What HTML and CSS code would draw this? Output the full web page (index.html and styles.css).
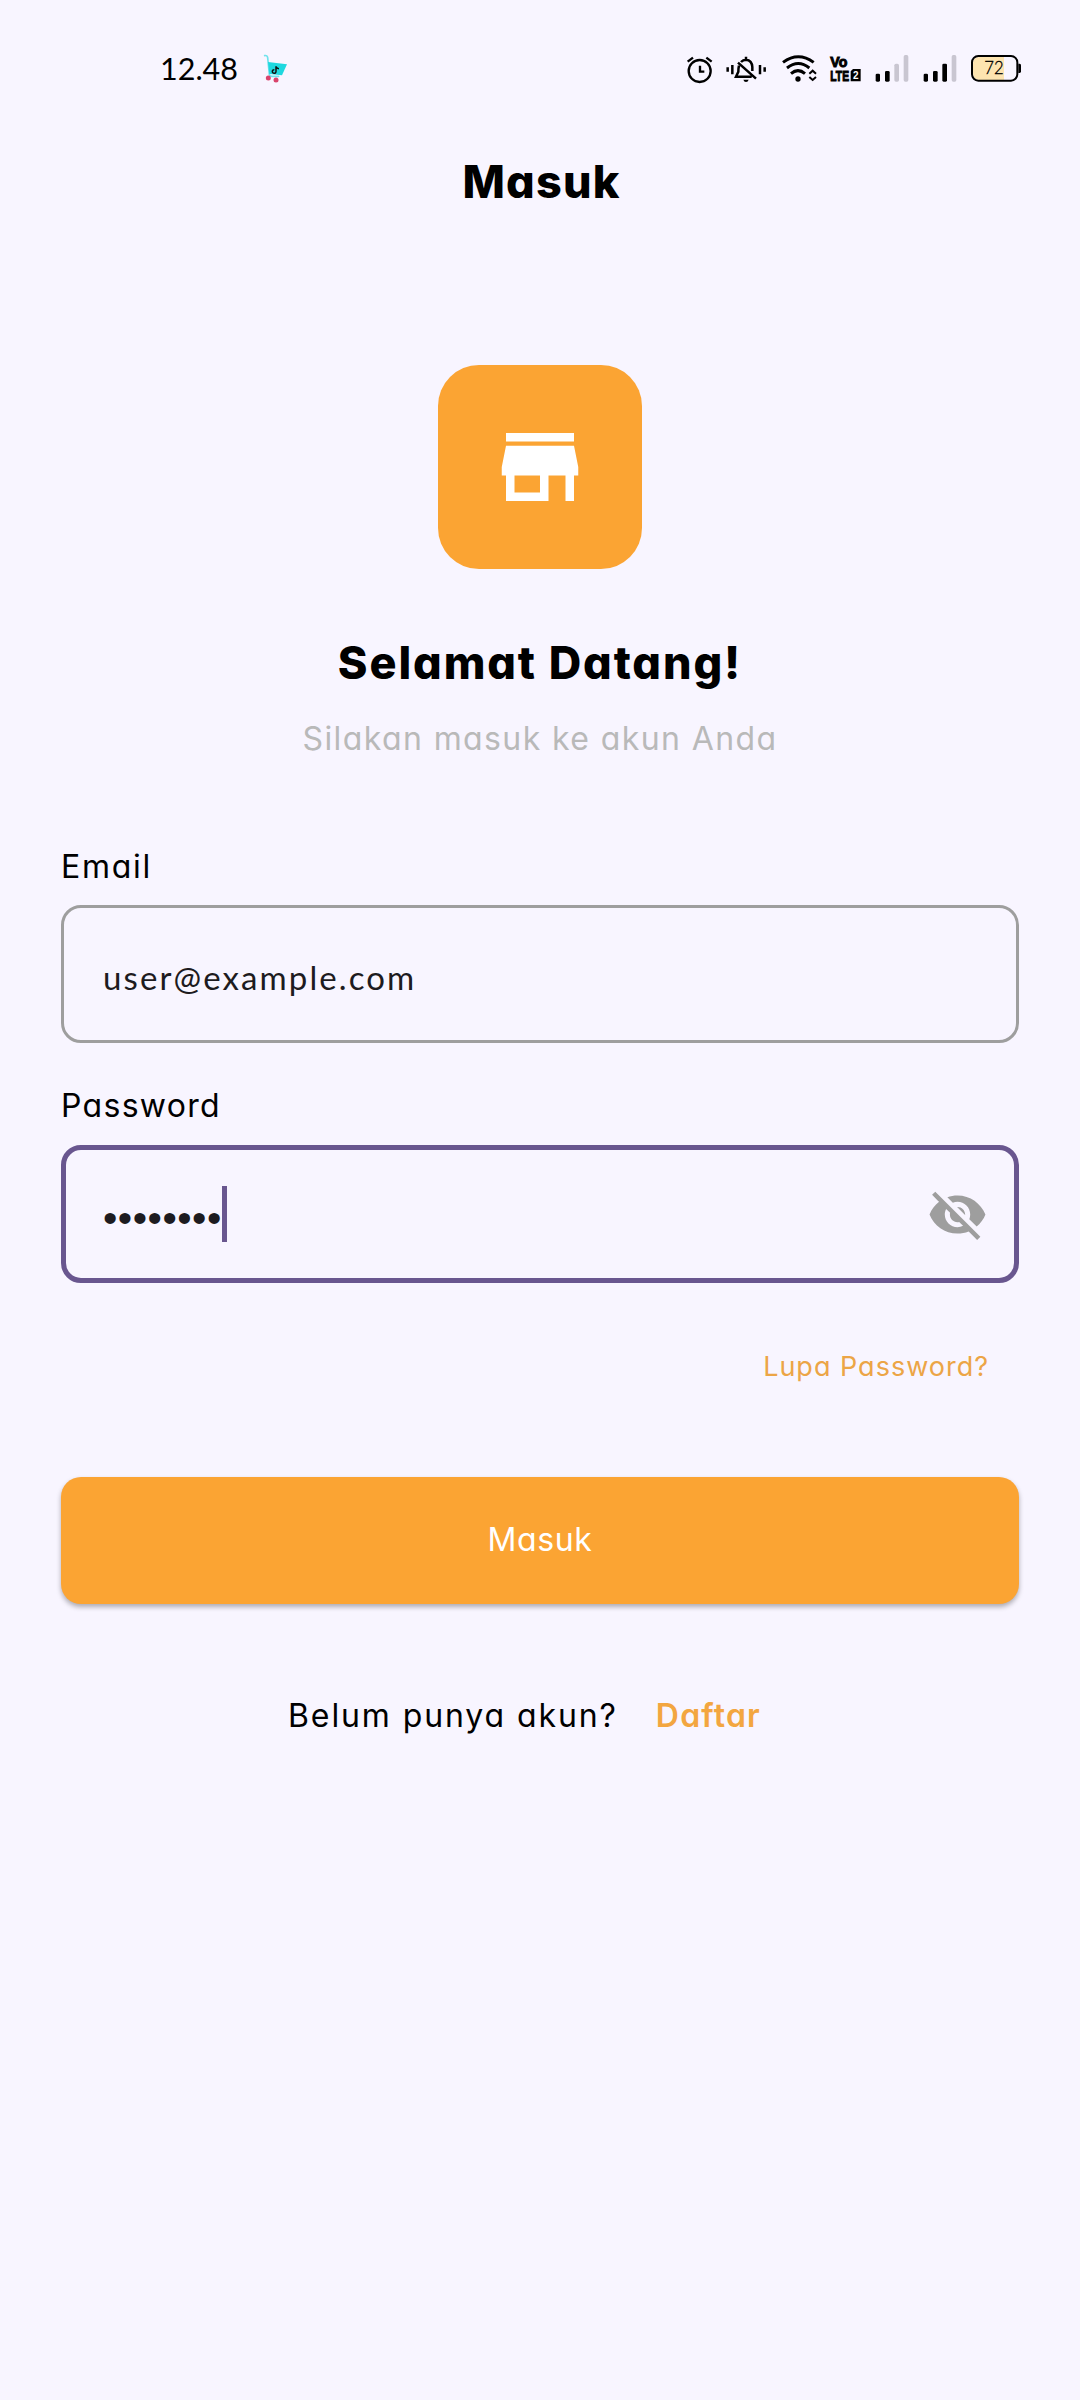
FILE: index.html
```html
<!DOCTYPE html>
<html lang="id">
<head>
<meta charset="utf-8">
<title>Masuk</title>
<link rel="stylesheet" href="styles.css">
</head>
<body>
<div class="status-bar">
  <span class="clock">12.48</span>
  <svg class="cart" viewBox="366 0 78 180" width="26" height="60" aria-hidden="true">
    <path d="M374 47q8-2 9 6l5 50q1 6 8 6h20" fill="none" stroke="#6fe3ec" stroke-width="5" stroke-linecap="round"/>
    <path d="M384 66l57 7-15 33-38-4z" fill="#1fd8df"/>
    <path d="M408 79v15a5.500 5.500 0 1 1-5-5M408 80q3 6 9 6" fill="none" stroke="#111" stroke-width="4.500"/>
    <circle cx="385" cy="114" r="7.500" fill="#d9436c"/><circle cx="408" cy="120" r="7.500" fill="#d9436c"/>
  </svg>
  <div class="status-icons">
    <svg class="alarm" viewBox="42 0 96 180" width="32" height="60" aria-hidden="true">
      <g fill="none" stroke="#000" stroke-width="7"><circle cx="89" cy="93" r="33"/><path d="M90 77v18h13M53 65l16-12M109 53l16 12"/></g>
    </svg>
    <svg class="silent" viewBox="162 0 132 180" width="44" height="60" aria-hidden="true">
      <g fill="none" stroke="#000" stroke-width="7.500"><path d="M173 82v13M187 75v28M270 75v28M284 82v13M228 50v10M213 66q6-7 15-7 18 2 19 22v12M207 77q-2 8-2 18l-7 15h47M204 68l54 48" /></g>
      <path d="M220 119h16q-2 7-8 7t-8-7z"/>
    </svg>
    <svg class="wifi" viewBox="330 0 114 180" width="38" height="60" aria-hidden="true">
      <g fill="none" stroke="#000" stroke-width="9"><path d="M339 67q46-34 92 0M351 84q34-27 67 0M363 101q21-18 42 0"/></g>
      <circle cx="384" cy="117" r="8"/>
      <path d="M418 101l10-9 10 9M418 111l10 9 10-9" fill="none" stroke="#000" stroke-width="6"/>
    </svg>
    <svg class="volte" viewBox="474 0 105 180" width="35" height="60" aria-hidden="true">
      <text class="net" x="481" y="81" textLength="51" lengthAdjust="spacingAndGlyphs">Vo</text>
      <text class="net" x="481" y="123" textLength="56" lengthAdjust="spacingAndGlyphs">LTE</text>
      <path d="M549 87h23v37h-30v-30z"/>
      <text class="sim" x="549" y="117">2</text>
    </svg>
    <svg class="signal" viewBox="42 0 108 180" width="36" height="60" aria-hidden="true">
      <rect x="47" y="101" width="13" height="24" rx="4"/><rect x="75" y="93" width="14" height="32" rx="4"/>
      <g fill="#c9c6d1"><rect x="103" y="71" width="14" height="54" rx="5"/><rect x="131" y="45" width="14" height="80" rx="5"/></g>
    </svg>
    <svg class="signal" viewBox="186 0 108 180" width="36" height="60" aria-hidden="true">
      <rect x="191" y="101" width="13" height="24" rx="4"/><rect x="219" y="93" width="14" height="32" rx="4"/><rect x="247" y="71" width="14" height="54" rx="4"/>
      <rect x="275" y="45" width="14" height="80" rx="5" fill="#c9c6d1"/>
    </svg>
    <svg class="battery" viewBox="330 0 156 180" width="52" height="60" aria-hidden="true">
      <path d="M432 51v69h-75q-18-2-18-20V69q0-16 18-18z" fill="#fde4b0"/>
      <rect x="336" y="48" width="136" height="74" rx="19" fill="none" stroke="#000" stroke-width="6"/>
      <path d="M475 71h4q4 0 4 5v18q0 5-4 5h-4z"/>
      <text class="level" x="373" y="103" textLength="58" lengthAdjust="spacingAndGlyphs">72</text>
    </svg>
  </div>
</div>
<header class="app-bar"><h1 class="title">Masuk</h1></header>
<main class="page">
  <div class="logo">
    <svg viewBox="0 0 24 24" width="102" height="102" fill="#fff" aria-hidden="true"><path d="M20 4H4v2h16V4zm1 10v-2l-1-5H4l-1 5v2h1v6h10v-6h4v6h2v-6h1zm-9 4H6v-4h6v4z"/></svg>
  </div>
  <h2 class="welcome">Selamat Datang!</h2>
  <p class="subtitle">Silakan masuk ke akun Anda</p>
  <form class="form">
    <label class="label label-email">Email</label>
    <div class="field"><span class="email">user@example.com</span></div>
    <label class="label">Password</label>
    <div class="field field-focused">
      <span class="dots">••••••••</span><i class="caret"></i>
      <svg class="eye" viewBox="0 0 24 24" width="61" height="61" fill="#9e9e9e" aria-hidden="true"><path d="M12 7c2.760 0 5 2.240 5 5 0 .65-.13 1.260-.36 1.830l2.920 2.920c1.510-1.260 2.700-2.890 3.430-4.750-1.730-4.390-6-7.500-11-7.500-1.400 0-2.740.25-3.980.7l2.160 2.160C10.740 7.130 11.350 7 12 7zM2 4.270l2.280 2.280.46.46C3.080 8.300 1.780 10.020 1 12c1.730 4.390 6 7.500 11 7.500 1.550 0 3.030-.3 4.380-.84l.42.42L19.730 22 21 20.730 3.270 3 2 4.270zM7.530 9.800l1.550 1.550c-.05.21-.08.43-.08.65 0 1.660 1.340 3 3 3 .22 0 .44-.03.65-.08l1.550 1.550c-.67.33-1.410.53-2.200.53-2.760 0-5-2.240-5-5 0-.79.2-1.530.53-2.200zm4.310-.78l3.150 3.150.02-.16c0-1.660-1.340-3-3-3l-.17.01z"/></svg>
    </div>
    <a class="forgot">Lupa Password?</a>
    <button class="submit" type="button">Masuk</button>
  </form>
  <p class="register"><span>Belum punya akun?</span><a class="register-link">Daftar</a></p>
</main>
</body>
</html>
```
FILE: styles.css
```css
* { box-sizing: border-box; }
body {
  margin: 0;
  min-height: 2400px;
  background: #f8f5ff;
  color: #000;
  font-family: Inter, "Noto Sans", sans-serif;
  font-feature-settings: "cv11" 1;
  font-size: 32px;
  line-height: 48px;
}
h1, h2, p { margin: 0; }
svg { display: block; flex: none; }

.status-bar {
  display: flex;
  height: 100px;
  padding: 40px 58px 0 160px;
  line-height: 60px;
}
.clock { width: 102px; font-family: Lato, sans-serif; font-size: 30.5px; line-height: 57px; }
.status-icons { display: flex; margin-left: auto; }
.silent { margin-left: 8px; }
.wifi { margin-left: 12px; }
.volte { margin-left: 10px; }
.signal { margin-left: 11px; }
.signal + .signal, .battery { margin-left: 12px; }
.net { font: bold 43px "Liberation Sans", sans-serif; stroke: #000; stroke-width: 3px; }
.sim { font: bold 30px "Liberation Sans", sans-serif; fill: #fff; }
.level { font: 300 53px Lato, sans-serif; stroke: #000; stroke-width: 1px; }

.app-bar { height: 164px; padding-left: 3px; text-align: center; }
.title { font-size: 45px; font-weight: 800; line-height: 164px; letter-spacing: 1.2px; }
.page {
  display: flex;
  flex-direction: column;
  align-items: center;
  padding: 101px 61px 0;
}
.logo {
  display: grid;
  place-items: center;
  width: 204px;
  height: 204px;
  border-radius: 41px;
  background: #fba433;
}
.welcome { margin-top: 61px; font-size: 45px; font-weight: 800; line-height: 66px; letter-spacing: 1.9px; }
.subtitle { margin-top: 19px; color: #b9b9b9; letter-spacing: 1.4px; }
.form { display: flex; flex-direction: column; width: 100%; margin-top: 80px; }
.label { display: block; letter-spacing: 1.3px; }
.label-email { letter-spacing: 1.7px; }
.field {
  display: flex;
  align-items: center;
  height: 138px;
  margin: 14px 0 39px;
  padding: 0 39px;
  border: 3px solid #9e9e9e;
  border-radius: 20px;
  color: #1d1b20;
}
.email { padding-top: 6px; font-family: Lato, sans-serif; font-size: 33px; letter-spacing: 2.1px; }
.field-focused { margin: 15px 0 60px; padding: 0 26px 0 37px; border: 5px solid #69568f; }
.dots { padding-top: 7px; font-family: "Liberation Sans", sans-serif; font-size: 41px; letter-spacing: .5px; }
.caret { width: 5px; height: 56px; background: #69568f; }
.eye { margin-left: auto; }
.forgot { align-self: flex-end; margin-right: 30px; color: #eca546; font-size: 27px; letter-spacing: 1px; }
.submit {
  height: 127px;
  margin-top: 86px;
  padding: 0 0 1px;
  border: 0;
  border-radius: 20px;
  background: #fba433;
  box-shadow: 0 3px 5px rgba(0, 0, 0, .3);
  color: #fff;
  font: inherit;
  letter-spacing: .6px;
}
.register { display: flex; align-self: flex-start; gap: 38px; margin: 88px 0 0 227px; letter-spacing: 1.9px; }
.register-link { color: #f3a640; font-weight: 600; letter-spacing: 1.2px; }
```
